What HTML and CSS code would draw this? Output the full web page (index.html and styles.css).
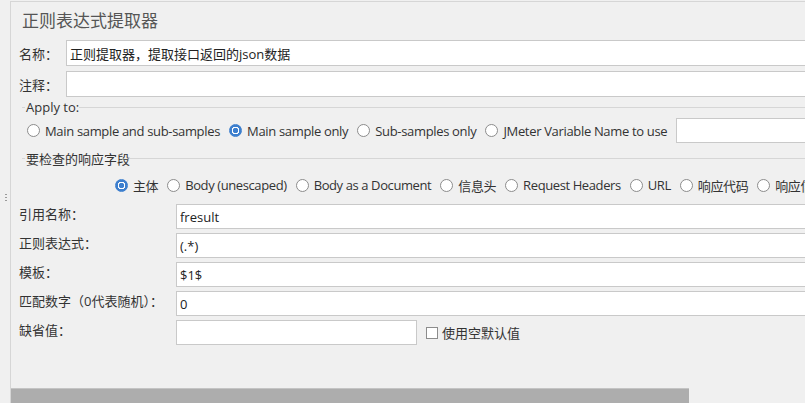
FILE: index.html
```html
<!DOCTYPE html>
<html lang="zh-CN">
<head>
    <meta charset="UTF-8">
    <meta name="viewport" content="width=device-width, initial-scale=1.0">
    <title>正则表达式提取器</title>
    <link rel="stylesheet" href="styles.css">
</head>
<body>

    <div class="frame">
        <div class="splitter"><span class="grip"></span></div>

        <div class="panel">
            <h1 class="title">正则表达式提取器</h1>

            <div class="field-row">
                <label class="field-label" for="name">名称：</label>
                <input class="text-input" id="name" type="text" value="正则提取器，提取接口返回的json数据">
            </div>

            <div class="field-row">
                <label class="field-label" for="comment">注释：</label>
                <input class="text-input" id="comment" type="text">
            </div>

            <div class="group">
                <div class="group-title"><span>Apply to:</span></div>
                <div class="radio-row apply-row">
                    <label class="option"><input type="radio" name="scope"> Main sample and sub-samples</label>
                    <label class="option"><input type="radio" name="scope" checked> Main sample only</label>
                    <label class="option"><input type="radio" name="scope"> Sub-samples only</label>
                    <label class="option"><input type="radio" name="scope"> JMeter Variable Name to use</label>
                    <input class="text-input var-input" type="text">
                </div>
            </div>

            <div class="group">
                <div class="group-title"><span>要检查的响应字段</span></div>
                <div class="radio-row field-options">
                    <label class="option"><input type="radio" name="field" checked> 主体</label>
                    <label class="option"><input type="radio" name="field"> Body (unescaped)</label>
                    <label class="option"><input type="radio" name="field"> Body as a Document</label>
                    <label class="option"><input type="radio" name="field"> 信息头</label>
                    <label class="option"><input type="radio" name="field"> Request Headers</label>
                    <label class="option"><input type="radio" name="field"> URL</label>
                    <label class="option"><input type="radio" name="field"> 响应代码</label>
                    <label class="option"><input type="radio" name="field"> 响应信息</label>
                </div>
            </div>

            <div class="form-grid">
                <div class="form-row">
                    <label class="form-label" for="refname">引用名称：</label>
                    <input class="text-input" id="refname" type="text" value="fresult">
                </div>
                <div class="form-row">
                    <label class="form-label" for="regex">正则表达式：</label>
                    <input class="text-input" id="regex" type="text" value="(.*)">
                </div>
                <div class="form-row">
                    <label class="form-label" for="template">模板：</label>
                    <input class="text-input" id="template" type="text" value="$1$">
                </div>
                <div class="form-row">
                    <label class="form-label" for="match">匹配数字（0代表随机）：</label>
                    <input class="text-input" id="match" type="text" value="0">
                </div>
                <div class="form-row">
                    <label class="form-label" for="default">缺省值：</label>
                    <input class="text-input short-input" id="default" type="text">
                    <label class="check"><input type="checkbox"> 使用空默认值</label>
                </div>
            </div>

            <div class="scrollbar"><div class="thumb"></div></div>
        </div>
    </div>

</body>
</html>
```

FILE: styles.css
```css
html, body {
    margin: 0;
    padding: 0;
    height: 403px;
    overflow: hidden;
}

body {
    font-family: 'Open Sans', 'Noto Sans CJK SC', sans-serif;
    font-size: 13px;
    color: #222;
    background-color: #f0f0f0;
}

.frame {
    display: flex;
    height: 403px;
}

.splitter {
    width: 10px;
    flex-shrink: 0;
    display: flex;
    justify-content: center;
    padding-top: 194px;
    box-sizing: border-box;
}

.grip {
    width: 2px;
    height: 9px;
    margin-left: 1px;
    background: repeating-linear-gradient(#9a9a9a 0 1px, transparent 1px 3px);
}

.panel {
    width: 830px;
    flex-shrink: 0;
    margin-top: 1px;
    border-top: 1px solid #d6d6d6;
    border-left: 1px solid #d6d6d6;
    display: flex;
    flex-direction: column;
}

.title {
    margin: 0;
    height: 38px;
    line-height: 38px;
    padding-left: 11px;
    font-size: 17px;
    font-weight: normal;
    color: #555;
}

.field-row {
    display: flex;
    align-items: center;
    padding-left: 8px;
}

.field-row + .field-row {
    margin-top: 5px;
}

.field-label {
    width: 47px;
    flex-shrink: 0;
    color: #333;
}

.text-input {
    flex: 1;
    height: 26px;
    box-sizing: border-box;
    border: 1px solid #c9c9c9;
    background: #fff;
    padding: 0 3px;
    font-family: inherit;
    font-size: 13px;
    color: #222;
    outline: none;
}

.group-title {
    display: flex;
    align-items: center;
    height: 20px;
    padding-left: 11px;
    color: #333;
}

.group-title::before,
.group-title::after {
    content: "";
    height: 1px;
    background: #d6d6d6;
}

.group-title::before {
    width: 3px;
    margin-right: 1px;
}

.group-title::after {
    flex: 1;
}

.radio-row {
    display: flex;
    align-items: center;
    gap: 9px;
    white-space: nowrap;
    color: #333;
    letter-spacing: -0.33px;
}

.apply-row {
    height: 27px;
    padding-left: 16px;
    margin-bottom: 4px;
}

.apply-row .var-input {
    height: 25px;
}

.field-options {
    height: 28px;
    padding-left: 104px;
    margin-top: 3px;
    letter-spacing: -0.4px;
}

.option {
    display: flex;
    align-items: center;
    gap: 5px;
}

.option input[type="radio"] {
    appearance: none;
    margin: 0;
    width: 13px;
    height: 13px;
    border-radius: 50%;
    border: 1px solid #8c8c8c;
    background: #fff;
}

.option input[type="radio"]:checked {
    border-color: #3d7fce;
    background: radial-gradient(circle, #3d7fce 0 2.5px, #fff 3px 3.6px, #3d7fce 4px);
}

.form-grid {
    margin-top: 5px;
    padding-left: 8px;
    display: flex;
    flex-direction: column;
    gap: 4px;
}

.form-row {
    display: flex;
    align-items: flex-start;
}

.form-row .text-input {
    height: 25px;
}

.form-label {
    width: 157px;
    flex-shrink: 0;
    padding-top: 1px;
    line-height: 18px;
    color: #333;
}

.form-row .short-input {
    flex: none;
    width: 241px;
}

.check {
    display: flex;
    align-items: center;
    gap: 4px;
    margin-left: 9px;
    height: 25px;
    color: #333;
}

.check input {
    appearance: none;
    margin: 0;
    width: 12px;
    height: 12px;
    border: 1px solid #8c8c8c;
    background: #fff;
}

.scrollbar {
    margin-top: auto;
    height: 15px;
}

.thumb {
    width: 678px;
    height: 15px;
    box-sizing: border-box;
    border-top: 1px solid #c4c4c4;
    background: #adadad;
}
```
